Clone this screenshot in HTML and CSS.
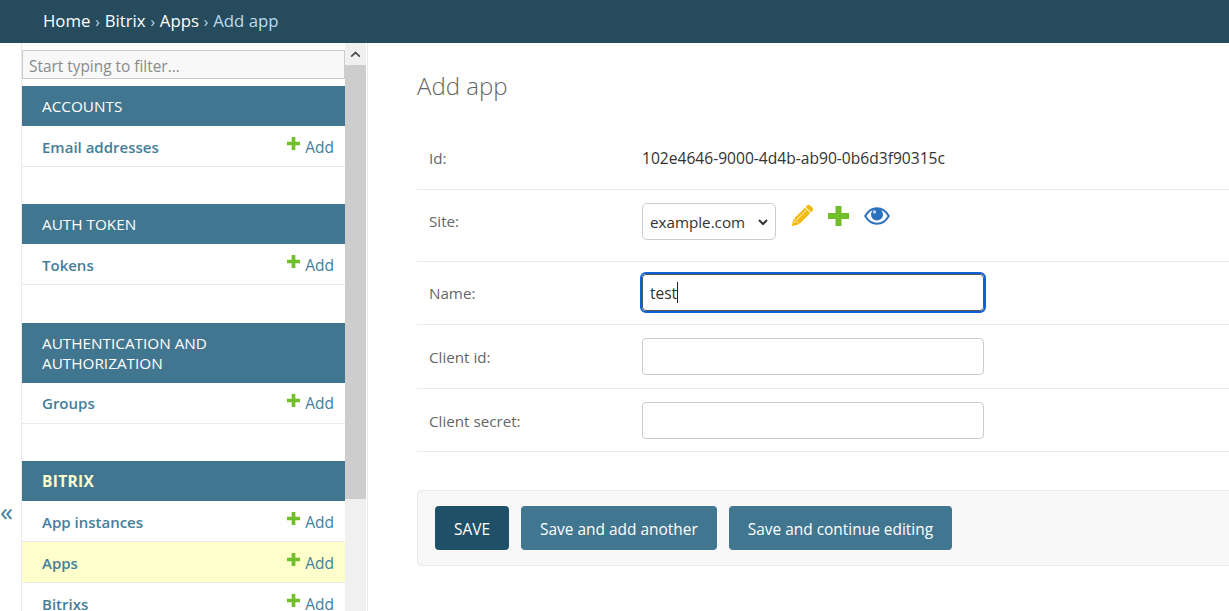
FILE: index.html
```html
<!DOCTYPE html>
<html>
<head>
<meta name="viewport" content="width=device-width, initial-scale=1">
<title>Add app</title>
<link rel="stylesheet" href="styles.css">
</head>
<body>
<!-- Top bar -->
<div class="breadcrumbs">
   <a href="#">Home</a> <span class="sep">›</span> <a href="#">Bitrix</a> <span class="sep">›</span> <a href="#">Apps</a> <span class="sep">›</span> Add app
</div>

<div class="page">
   <button class="toggle-sidebar">«</button>

   <!-- Sidebar -->
   <div class="sidebar">
      <nav class="sidebar-nav">
         <input class="filter" type="text" placeholder="Start typing to filter...">

         <div class="app-group">
            <div class="app-caption">Accounts</div>
            <div class="model-row"><a class="model-name" href="#">Email addresses</a><a class="add-link" href="#"><svg class="plus" viewBox="0 0 14 14"><path d="M5 0h4v5h5v4H9v5H5V9H0V5h5z"/></svg>Add</a></div>
         </div>

         <div class="app-group">
            <div class="app-caption">Auth Token</div>
            <div class="model-row"><a class="model-name" href="#">Tokens</a><a class="add-link" href="#"><svg class="plus" viewBox="0 0 14 14"><path d="M5 0h4v5h5v4H9v5H5V9H0V5h5z"/></svg>Add</a></div>
         </div>

         <div class="app-group">
            <div class="app-caption">Authentication and Authorization</div>
            <div class="model-row"><a class="model-name" href="#">Groups</a><a class="add-link" href="#"><svg class="plus" viewBox="0 0 14 14"><path d="M5 0h4v5h5v4H9v5H5V9H0V5h5z"/></svg>Add</a></div>
         </div>

         <div class="app-group">
            <div class="app-caption current">Bitrix</div>
            <div class="model-row"><a class="model-name" href="#">App instances</a><a class="add-link" href="#"><svg class="plus" viewBox="0 0 14 14"><path d="M5 0h4v5h5v4H9v5H5V9H0V5h5z"/></svg>Add</a></div>
            <div class="model-row selected"><a class="model-name" href="#">Apps</a><a class="add-link" href="#"><svg class="plus" viewBox="0 0 14 14"><path d="M5 0h4v5h5v4H9v5H5V9H0V5h5z"/></svg>Add</a></div>
            <div class="model-row"><a class="model-name" href="#">Bitrixs</a><a class="add-link" href="#"><svg class="plus" viewBox="0 0 14 14"><path d="M5 0h4v5h5v4H9v5H5V9H0V5h5z"/></svg>Add</a></div>
         </div>
      </nav>

      <div class="scrollbar">
         <div class="scroll-up"><svg viewBox="0 0 12 8" width="11" height="7"><path d="M1 6.5 6 1.8l5 4.7" fill="none" stroke="#505050" stroke-width="2"/></svg></div>
         <div class="scroll-thumb"></div>
      </div>
   </div>

   <!-- Form -->
   <main class="content">
      <h1 class="title">Add app</h1>

      <div class="form-row">
         <label class="form-label">Id:</label>
         <div class="readonly">102e4646-9000-4d4b-ab90-0b6d3f90315c</div>
      </div>

      <div class="form-row site-row">
         <label class="form-label">Site:</label>
         <div class="select-wrap">
            <select class="select"><option>example.com</option></select>
            <svg class="select-arrow" width="10" height="7" viewBox="0 0 10 7"><path d="M1 1l4 4 4-4" fill="none" stroke="#333" stroke-width="2"/></svg>
         </div>
         <div class="related">
            <!-- change -->
            <a href="#"><svg width="23" height="23" viewBox="0 0 24 24"><g transform="rotate(45 12 12)"><rect x="8" y="-2.500" width="8" height="4.500" rx="1" fill="#f2b90f"/><rect x="8" y="3" width="8" height="16" fill="#f2b90f"/><rect x="10.300" y="4" width="1.200" height="14" fill="#fbe29a"/><path d="M8 19.500h8L12 26.500z" fill="#f2b90f"/><path d="M10.300 20.500h1.200v2.500z" fill="#fff"/></g></svg></a>
            <!-- add -->
            <a href="#"><svg width="21" height="20" viewBox="0 0 21 20"><path fill="#70bf2b" d="M7.500 0h6v7H21v6h-7.500v7h-6v-7H0V7h7.500z"/></svg></a>
            <!-- view -->
            <a href="#"><svg width="26" height="18" viewBox="0 0 26 18"><path d="M1.200 9C4 4.200 8 1.200 13 1.200S22 4.200 24.800 9C22 13.800 18 16.800 13 16.800S4 13.800 1.200 9Z" fill="#fff" stroke="#2b70bf" stroke-width="2"/><circle cx="13" cy="7.500" r="6" fill="#2b70bf"/><circle cx="10.500" cy="5" r="1.700" fill="#bcd5f0"/></svg></a>
         </div>
      </div>

      <div class="form-row input-row">
         <label class="form-label">Name:</label>
         <div class="focused-input">test<span class="caret"></span></div>
      </div>

      <div class="form-row input-row">
         <label class="form-label">Client id:</label>
         <input class="text-input" type="text">
      </div>

      <div class="form-row input-row">
         <label class="form-label">Client secret:</label>
         <input class="text-input" type="text">
      </div>

      <div class="submit-row">
         <button class="btn btn-default">SAVE</button>
         <button class="btn">Save and add another</button>
         <button class="btn">Save and continue editing</button>
      </div>
   </main>
</div>
</body>
</html>
```

FILE: styles.css
```css
html,
body {
   margin: 0;
   padding: 0;
   height: 100%;
   overflow: hidden;
   font-family: "Open Sans", "Noto Sans", sans-serif;
   font-size: 14px;
   color: #333;
   background: #fff;
}

a {
   text-decoration: none;
}

.breadcrumbs {
   height: 43px;
   box-sizing: border-box;
   padding: 9px 0 0 43px;
   background: #264b5d;
   color: #bcdcf0;
   font-size: 16.800px;
   line-height: 24px;
   white-space: nowrap;
}

.breadcrumbs a {
   color: #fff;
}

.breadcrumbs .sep {
   font-size: 15px;
   margin: 0 0.500px;
}

.page {
   display: flex;
   height: 568px;
   overflow: hidden;
}

.toggle-sidebar {
   width: 22px;
   flex: none;
   margin: 0;
   padding: 0 8px 87px 0;
   border: 0;
   border-right: 1px solid #eaeaea;
   background: #fff;
   color: #447e9b;
   font-family: "Open Sans", sans-serif;
   font-size: 26px;
   line-height: 26px;
   display: flex;
   align-items: flex-end;
   justify-content: center;
}

.sidebar {
   display: flex;
   flex: none;
   width: 345px;
   border-right: 1px solid #eaeaea;
   height: 568px;
   overflow: hidden;
}

.sidebar-nav {
   width: 323px;
   flex: none;
   padding-top: 7px;
}

.filter {
   display: block;
   box-sizing: border-box;
   width: 323px;
   height: 29px;
   margin: 0 0 7px;
   padding: 3px 6px 0;
   border: 1px solid #ccc;
   border-radius: 0;
   background: #f8f8f8;
   font-family: inherit;
   font-size: 15.400px;
   outline: 0;
}

.filter::placeholder {
   color: #8a8a8a;
}

.app-group {
   margin-bottom: 37.400px;
}

.app-caption {
   padding: 10px 20px;
   background: #417690;
   color: #fff;
   font-size: 15.300px;
   line-height: 20px;
   text-transform: uppercase;
}

.app-caption.current {
   color: #ffffcc;
   font-weight: 700;
   font-size: 15.500px;
   letter-spacing: 0.300px;
}

.model-row {
   display: flex;
   justify-content: space-between;
   align-items: center;
   height: 41px;
   box-sizing: border-box;
   padding: 1px 11px 0 20px;
   border-bottom: 1px solid #eaeaea;
   background: #fff;
}

.model-row.selected {
   background: #ffffcc;
}

.model-name {
   color: #447e9b;
   font-weight: 600;
   font-size: 15px;
}

.add-link {
   display: flex;
   align-items: center;
   color: #447e9b;
   font-size: 15.500px;
}

.plus {
   width: 13px;
   height: 13px;
   margin: -6px 5px 0 0;
   fill: #70bf2b;
}

.scrollbar {
   width: 21px;
   flex: none;
   background: #f0f0f0;
   display: flex;
   flex-direction: column;
}

.scroll-up {
   height: 22px;
   display: flex;
   align-items: center;
   justify-content: center;
}

.scroll-thumb {
   height: 434px;
   background: #cdcdcd;
}

.content {
   flex: 1;
   min-width: 0;
   padding: 0 0 0 49px;
   margin-right: -60px;
}

.title {
   margin: 0;
   padding: 26px 0 0;
   height: 83px;
   box-sizing: border-box;
   font-size: 24px;
   line-height: 34px;
   font-weight: 300;
   color: #666;
}

.form-row {
   display: flex;
   align-items: center;
   height: 63.600px;
   box-sizing: border-box;
   padding-left: 12px;
   border-bottom: 1px solid #eaeaea;
}

.site-row {
   height: 72px;
   align-items: flex-start;
   padding-top: 13px;
}

.form-label {
   width: 213px;
   flex: none;
   padding-top: 1px;
   color: #666;
   font-size: 15.200px;
}

.site-row .form-label {
   padding-top: 8px;
}

.readonly {
   padding-top: 1px;
   color: #333;
   font-size: 15.600px;
}

.select-wrap {
   position: relative;
   flex: none;
   line-height: 0;
}

.select {
   appearance: none;
   box-sizing: border-box;
   width: 134px;
   height: 37px;
   padding: 2px 0 0 7px;
   border: 1px solid #ccc;
   border-radius: 5px;
   background: #fff;
   color: #333;
   font-family: inherit;
   font-size: 15.200px;
}

.select-arrow {
   position: absolute;
   right: 8px;
   top: 16px;
}

.related {
   display: flex;
   align-items: center;
   gap: 15px;
   margin: 2px 0 0 14px;
}

.related a {
   display: block;
   line-height: 0;
}

.text-input,
.focused-input {
   box-sizing: border-box;
   width: 342px;
   height: 37px;
   padding: 0 7px;
   border: 1px solid #ccc;
   border-radius: 4px;
   font-family: inherit;
   font-size: 15.500px;
   color: #333;
   background: #fff;
}

.focused-input {
   display: flex;
   align-items: center;
   border-color: #555;
   outline: 2px solid #0f5fd7;
   outline-offset: 0;
}

.caret {
   display: inline-block;
   width: 1px;
   height: 21px;
   background: #222;
}

.submit-row {
   display: flex;
   gap: 12px;
   margin-top: 38px;
   padding: 15px 17px;
   height: 76px;
   box-sizing: border-box;
   background: #f8f8f8;
   border: 1px solid #eaeaea;
   border-radius: 4px;
}

.btn {
   height: 44px;
   padding: 2px 19px 0;
   border: 0;
   border-radius: 4px;
   background: #417690;
   color: #fff;
   font-family: inherit;
   font-size: 15.450px;
}

.btn-default {
   background: #205067;
}
```
